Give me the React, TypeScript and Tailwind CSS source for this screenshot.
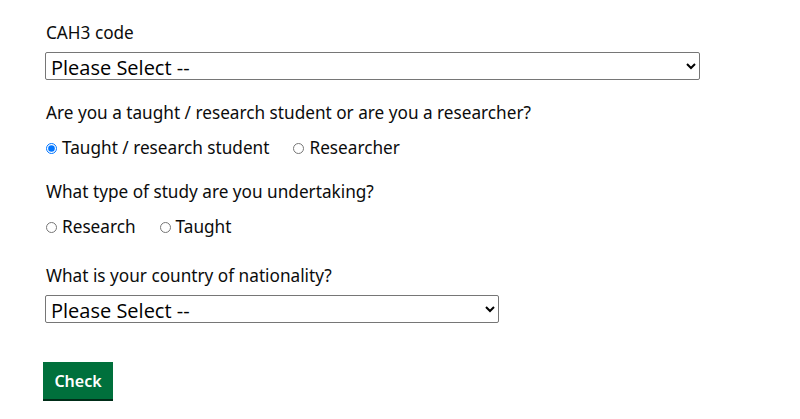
import { useState } from "react";

const labelFont = { fontFamily: '"Noto Sans", Arial, sans-serif' };
const selectFont = { fontFamily: '"Open Sans", "Noto Sans", sans-serif' };

function Radio({ name, label, checked, onChange }: { name: string; label: string; checked: boolean; onChange: () => void }) {
    return (
        <label className="flex items-center gap-[5px] cursor-pointer">
            <input
                type="radio"
                name={name}
                checked={checked}
                onChange={onChange}
                className="m-0 w-[11px] h-[11px] accent-[#0075ff]"
            />
            <span>{label}</span>
        </label>
    );
}

export default function App() {
    const [role, setRole] = useState("taught");
    const [study, setStudy] = useState("");

    return (
        <div className="min-h-screen bg-white text-[#0b0c0c]" style={labelFont}>
            <form className="pl-[46px] pt-[21px] flex flex-col items-start text-[17.2px] leading-[24px]" onSubmit={(e) => e.preventDefault()}>
                <label className="block">CAH3 code</label>
                <select
                    className="mt-[7px] -ml-px w-[655px] h-[28px] border border-[#767676] rounded-[2px] bg-white pl-[1px] text-[20px] text-black"
                    style={selectFont}
                >
                    <option>Please Select --</option>
                </select>

                <p className="mt-[21px]">Are you a taught / research student or are you a researcher?</p>
                <div className="mt-[11px] flex gap-[24px]">
                    <Radio name="role" label="Taught / research student" checked={role === "taught"} onChange={() => setRole("taught")} />
                    <Radio name="role" label="Researcher" checked={role === "researcher"} onChange={() => setRole("researcher")} />
                </div>

                <p className="mt-[20px]">What type of study are you undertaking?</p>
                <div className="mt-[11px] flex gap-[24px]">
                    <Radio name="study" label="Research" checked={study === "research"} onChange={() => setStudy("research")} />
                    <Radio name="study" label="Taught" checked={study === "taught"} onChange={() => setStudy("taught")} />
                </div>

                <p className="mt-[25px]">What is your country of nationality?</p>
                <select
                    className="mt-[7px] -ml-px w-[454px] h-[28px] border border-[#767676] rounded-[2px] bg-white pl-[1px] text-[20px] text-black"
                    style={selectFont}
                >
                    <option>Please Select --</option>
                </select>

                <button
                    type="submit"
                    className="mt-[39px] -ml-[3px] w-[70px] h-[37px] bg-[#00703c] text-white font-semibold text-[16px] shadow-[0_2px_0_#002d18]"
                >
                    Check
                </button>
            </form>
        </div>
    );
}
